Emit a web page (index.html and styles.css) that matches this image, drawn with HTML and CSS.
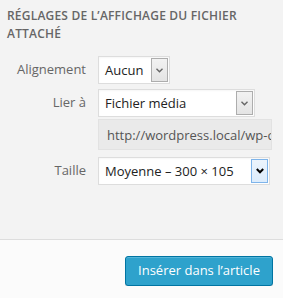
FILE: index.html
```html
<!DOCTYPE html>
<html lang="fr">
<head>
  <meta charset="UTF-8">
  <meta name="viewport" content="width=device-width, initial-scale=1.0">
  <title>Réglages de l'affichage du fichier attaché</title>
  <link rel="stylesheet" href="styles.css">
</head>
<body>
  <div class="settings">
    <h3>Réglages de l’affichage du fichier attaché</h3>

    <div class="row row-align">
      <label class="label">Alignement</label>
      <div class="select select-short">
        <span class="value">Aucun</span>
        <span class="arrow"><svg width="7" height="5" viewBox="0 0 7 5"><polyline points="0.5,0.8 3.5,3.8 6.5,0.8" fill="none" stroke="#666" stroke-width="1.4"/></svg></span>
      </div>
    </div>

    <div class="row row-link">
      <label class="label">Lier à</label>
      <div class="select select-mid">
        <span class="value">Fichier média</span>
        <span class="arrow"><svg width="7" height="5" viewBox="0 0 7 5"><polyline points="0.5,0.8 3.5,3.8 6.5,0.8" fill="none" stroke="#666" stroke-width="1.4"/></svg></span>
      </div>
    </div>

    <div class="row row-url">
      <span class="label"></span>
      <input class="url" type="text" readonly value="http://wordpress.local/wp-content/uploads/2014/01/image.png">
    </div>

    <div class="row row-size">
      <label class="label">Taille</label>
      <div class="select select-long">
        <span class="value">Moyenne – 300 × 105</span>
        <span class="arrow arrow-hover"><svg width="8" height="6" viewBox="0 0 8 6"><polyline points="0.8,1 4,4.3 7.2,1" fill="none" stroke="#000" stroke-width="2"/></svg></span>
      </div>
    </div>
  </div>

  <div class="toolbar">
    <button class="button-primary">Insérer dans l’article</button>
  </div>
</body>
</html>
```

FILE: styles.css
```css
body {
  margin: 0;
  font-family: "Open Sans", sans-serif;
  background: #fbfbfb;
  color: #333;
}
.settings {
  background: #f3f3f3;
  height: 240px;
  border-bottom: 1px solid #ddd;
  box-sizing: border-box;
  padding-top: 7px;
}
h3 {
  margin: 0 0 13px 7px;
  font-size: 12px;
  font-weight: 600;
  line-height: 18px;
  letter-spacing: 0.2px;
  text-transform: uppercase;
  color: #666;
  width: 250px;
}
.row {
  display: grid;
  grid-template-columns: 86px auto;
  column-gap: 12px;
  align-items: center;
}
.row-link { margin-top: 5px; }
.row-url { margin-top: 2px; }
.row-size { margin-top: 7px; }
.label {
  text-align: right;
  font-size: 13px;
  color: #666;
  line-height: 20px;
  margin-top: -3px;
}
.select {
  display: flex;
  align-items: stretch;
  height: 28px;
  box-sizing: border-box;
  background: #fff;
  border: 1px solid #ddd;
  box-shadow: inset 0 1px 2px rgba(0,0,0,0.04);
  padding: 1px 1px 1px 0;
  font-size: 13px;
}
.select-short { width: 72px; }
.select-mid { width: 157px; }
.select-long { width: 172px; }
.value {
  flex: 1;
  padding-left: 6px;
  line-height: 24px;
  color: #222;
  white-space: nowrap;
}
.arrow {
  width: 15px;
  display: flex;
  align-items: center;
  justify-content: center;
  background: linear-gradient(#f2f2f2, #e4e4e4);
  border: 1px solid #adadad;
}
.arrow-hover {
  background: linear-gradient(#ecf4fc, #dcecfc);
  border-color: #7eb4ea;
}
.url {
  width: 174px;
  height: 31px;
  box-sizing: border-box;
  background: #eaeaea;
  border: 1px solid #e2e2e2;
  padding: 0 0 0 8px;
  font-family: "Open Sans", sans-serif;
  font-size: 13px;
  color: #555;
  outline: none;
}
.toolbar {
  display: flex;
  justify-content: flex-end;
  padding: 16px 10px 0 0;
}
.button-primary {
  height: 30px;
  width: 148px;
  padding: 0 0 2px;
  font-family: "Open Sans", sans-serif;
  font-size: 13px;
  color: #fff;
  background: #2ea2cc;
  border: 1px solid #0074a2;
  border-radius: 3px;
  box-shadow: inset 0 1px 0 rgba(120,200,230,0.5), 0 1px 0 rgba(0,0,0,0.15);
  cursor: pointer;
}
```
